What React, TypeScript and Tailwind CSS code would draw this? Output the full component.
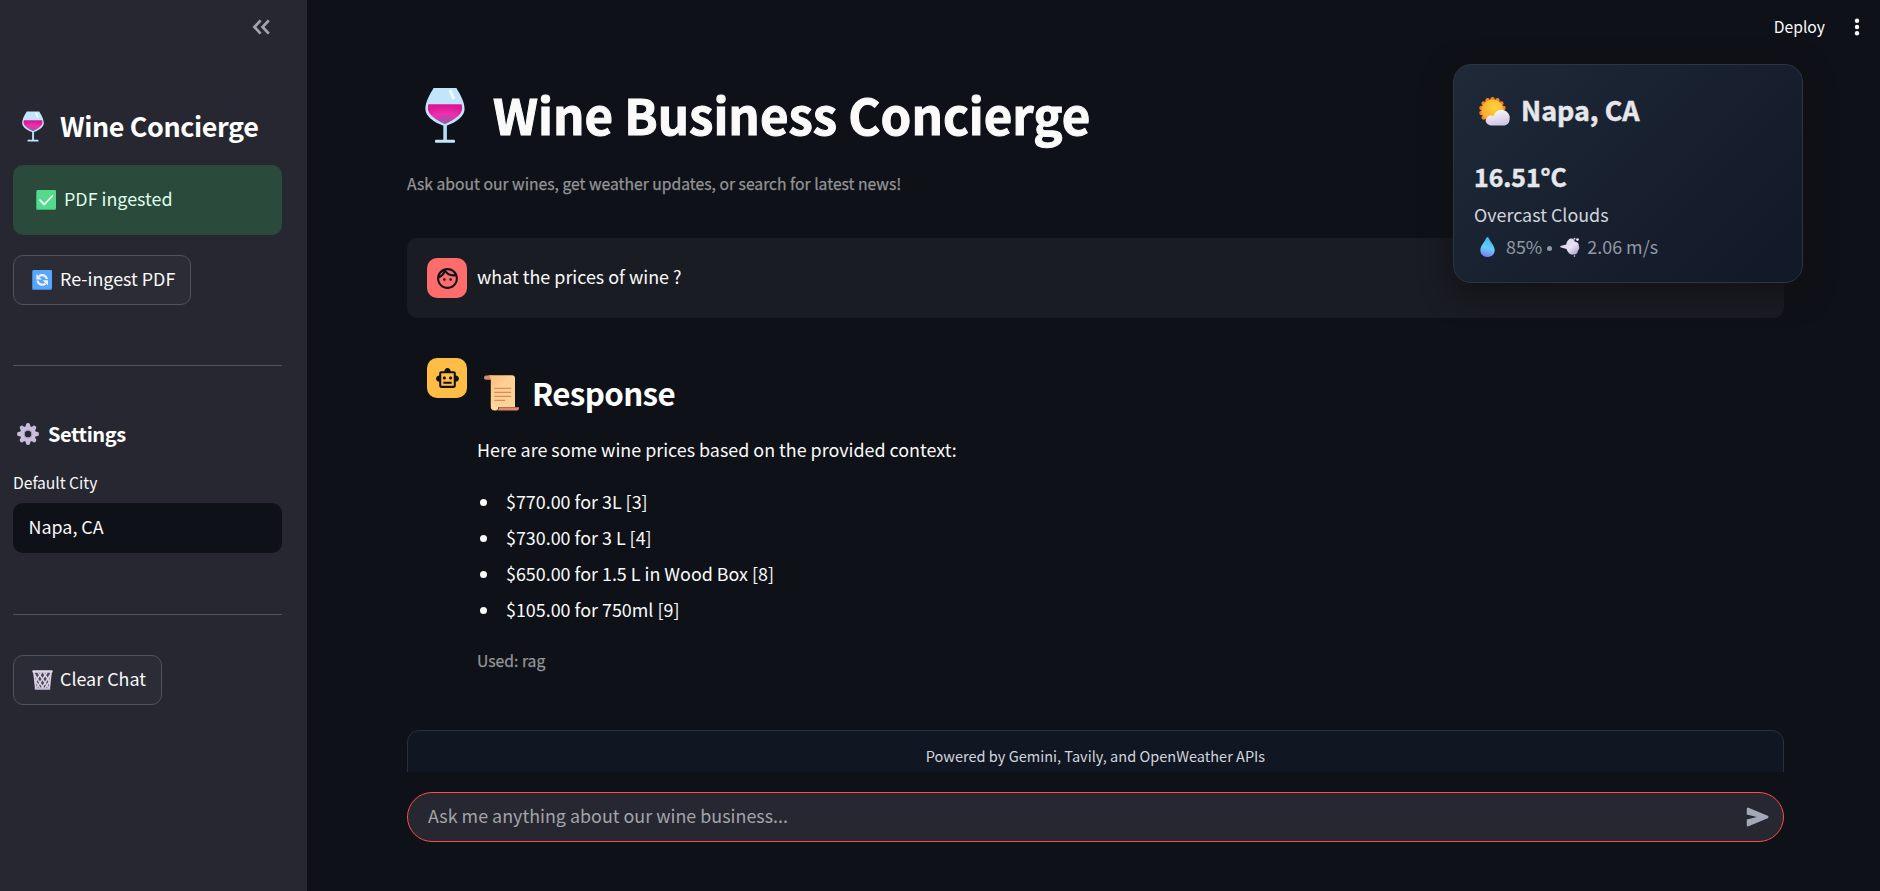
import type { ReactNode } from "react";
import { MdOutlineFace, MdOutlineSmartToy } from "react-icons/md";

function WineGlass({ className }: { className: string }) {
  return (
    <svg viewBox="0 0 40 55" className={className}>
      <defs>
        <radialGradient id="wine" cx=".5" cy="1.05" r=".95">
          <stop offset="0" stopColor="#8a6fbb" />
          <stop offset="0.3" stopColor="#b24bab" />
          <stop offset="0.62" stopColor="#ee2fae" />
          <stop offset="1" stopColor="#dc1896" />
        </radialGradient>
      </defs>
      <path d="M18.3 34h3.6v18h-3.6z" fill="#b4dcf5" />
      <rect x="10" y="51.8" width="20" height="3" rx="1" fill="#c3e8fd" />
      <path d="M8.6 0h22.8c3.2 5.4 8.2 13.4 8.2 21 0 7-7.6 12.8-17.6 16.6h-4C8 33.8.4 28 .4 21 .4 13.4 5.4 5.4 8.6 0z" fill="#c0e5fc" />
      <path d="M3.4 16.2h33.2c.9 3.2.8 6.3-1.2 9.2C32 30 25 33.6 20 36.2 15 33.6 8 30 4.6 25.4c-2-2.9-2.1-6-1.2-9.2z" fill="url(#wine)" />
      <path d="M25.4 3.4l3 6.4" stroke="#f2fbff" strokeWidth="3.2" strokeLinecap="round" />
    </svg>
  );
}

function CheckMark() {
  return (
    <svg viewBox="0 0 20 20" className="size-5">
      <rect width="20" height="20" rx="1.6" fill="#3bb577" />
      <rect x="1" width="19" height="19" rx="1.4" fill="#55d98e" />
      <path d="M4 10.2l4.2 4.3L16.3 6" fill="none" stroke="#fff" strokeWidth="1.8" strokeLinecap="round" strokeLinejoin="round" />
    </svg>
  );
}

function Refresh() {
  return (
    <svg viewBox="0 0 20 20" className="size-5">
      <rect width="20" height="20" rx="1.6" fill="#3f86dc" />
      <rect x="1" width="19" height="19" rx="1.4" fill="#57a6fb" />
      <g fill="none" stroke="#f3f1fd" strokeWidth="2.2">
        <path d="M15 9A5 5 0 0 0 7 6.2" />
        <path d="M5.4 10.6a5 5 0 0 0 8 3" />
      </g>
      <path d="M4.4 4v5.4h5.4zM16 15.6v-5.4h-5.4z" fill="#f3f1fd" />
    </svg>
  );
}

function Gear() {
  return (
    <svg viewBox="0 0 22 22" className="size-[22px]">
      <g strokeWidth="4.4" strokeLinecap="round">
        <path d="M11 2.2v3M11 17v2.8M2.2 11h3M17 11h2.8" stroke="#c9bedb" />
        <path d="M4.9 4.9l2 2M15.1 15.1l2 2M17.1 4.9l-2 2M4.9 17.1l2-2" stroke="#c4b8d7" />
      </g>
      <circle cx="11" cy="11" r="5.8" fill="none" stroke="#c9bfdb" strokeWidth="4.6" />
      <circle cx="11" cy="11" r="4" fill="none" stroke="#a99bc0" strokeWidth="1" />
    </svg>
  );
}

function Trash() {
  return (
    <svg viewBox="0 0 21 20" className="h-5 w-[21px]">
      <path d="M2 2h17l-1.8 17.5H3.8z" fill="#4c4858" />
      <g fill="none" stroke="#d8d1e3" strokeWidth="1.5">
        <path d="M2.2 4l9.4 14.5M6 2.5l10.8 15.8M11.5 2.5l6 9M3.4 11l4.8 7.5" />
        <path d="M18.8 4L9.4 18.5M15 2.5L4.2 18.3M9.5 2.5l-6 9M17.6 11l-4.8 7.5" />
        <path d="M2 2l1.9 17M19 2l-1.900 17" strokeWidth="1.8" />
      </g>
      <rect x=".3" y=".2" width="20.4" height="2.6" rx="1" fill="#dfd9e8" />
      <rect x="2.6" y="17.8" width="15.8" height="2" rx="1" fill="#c5bad4" />
    </svg>
  );
}

function Scroll() {
  return (
    <svg viewBox="0 0 35 36" className="h-9 w-[35px]">
      <defs>
        <linearGradient id="paper" x1="0" y1="0" x2="1" y2="1">
          <stop offset="0" stopColor="#fbb877" />
          <stop offset="0.4" stopColor="#ffcf93" />
          <stop offset="1" stopColor="#fbd49a" />
        </linearGradient>
      </defs>
      <path d="M0 2.6C0 1 1.2.4 3 .4h6v4.4H2C.8 4.8 0 4 0 2.6z" fill="#d98b66" />
      <path d="M4 .3h24.2c1.7 0 2.8 1.1 2.8 2.8v29H11c-3 0-4.2-1.6-4.2-4V5C6.8 2.2 6 .8 4 .3z" fill="url(#paper)" />
      <path d="M12 35.6c2.2 0 3-1.4 3-3.4h20c.2 2.2-.8 3.4-2.8 3.4z" fill="#e0896a" />
      <path d="M6.8 28v4c0 2.2 1.5 3.6 3.8 3.6 2.5 0 3.9-1.3 3.9-3.4z" fill="#ffd99b" />
      <path d="M10.2 13.4h17M10.2 17.4h17M10.2 21.4h17M10.2 25.4h11" stroke="#d98c5c" strokeWidth="1.3" />
    </svg>
  );
}

function SunCloud() {
  const rays = Array.from({ length: 14 }, (_, i) => (i * Math.PI * 2) / 14);
  return (
    <svg viewBox="0 0 31 29" className="h-[29px] w-[31px]">
      <defs>
        <radialGradient id="sun" cx=".6" cy=".35" r=".7">
          <stop offset="0" stopColor="#ffd43a" />
          <stop offset="1" stopColor="#f8a52c" />
        </radialGradient>
        <linearGradient id="cloud" x1=".3" y1="0" x2=".6" y2="1">
          <stop offset="0" stopColor="#fbfafd" />
          <stop offset="1" stopColor="#cdc6e4" />
        </linearGradient>
      </defs>
      {rays.map((a) => (
        <circle key={a} cx={13.5 + Math.sin(a) * 11.3} cy={13.5 - Math.cos(a) * 11.3} r="2.2" fill="#f5822a" />
      ))}
      <circle cx="13.5" cy="13.5" r="11" fill="url(#sun)" />
      <path d="M12 28.500a5 5 0 0 1 0-10c1 0 1.8.2 2.5.6a7.3 7.3 0 0 1 16 3.6c0 3.4-2.6 5.8-6 5.8z" fill="url(#cloud)" />
    </svg>
  );
}

function Droplet() {
  return (
    <svg viewBox="0 0 15 20" className="h-5 w-[15px]">
      <defs>
        <linearGradient id="drop" x1=".6" y1="0" x2=".4" y2="1">
          <stop offset="0" stopColor="#3fb4ea" />
          <stop offset="0.55" stopColor="#66cdfb" />
          <stop offset="1" stopColor="#7c7bf2" />
        </linearGradient>
      </defs>
      <path d="M7.5 0c.5 0 .8.3 1 .7C11 5.5 14.7 9 14.7 13.2c0 4-3.2 6.8-7.2 6.8S.3 17.2.3 13.2C.3 9 4 5.5 6.5.7c.2-.4.5-.7 1-.7z" fill="url(#drop)" />
    </svg>
  );
}

function Dash() {
  return (
    <svg viewBox="0 0 20 20" className="size-5">
      <defs>
        <linearGradient id="puff" x1="0" y1="0" x2="1" y2="1">
          <stop offset="0" stopColor="#d9cde6" />
          <stop offset=".55" stopColor="#eae1f3" />
          <stop offset="1" stopColor="#a995c4" />
        </linearGradient>
      </defs>
      <path d="M.3 9l6-1.6C7 3.4 9.6.8 12.4 1.8c1.6.4 2 1.6 2.2 2.6 2.6.2 4.4 2 4.2 4 .8 2 .6 4-1 5.4.2 2.4-1.8 4-4 3.8-3.6.6-6.4-2.4-7.2-5.6L.3 10.3z" fill="url(#puff)" />
      <circle cx="14.5" cy="1.7" r="1" fill="#d8cce6" />
      <circle cx="17.5" cy="2.6" r="1.4" fill="#e9e2f2" />
      <circle cx="14.5" cy="19" r=".8" fill="#d8cce6" />
    </svg>
  );
}

function T({ children, className = "pb-[5px]" }: { children: ReactNode; className?: string }) {
  return <span className={"whitespace-nowrap " + className}>{children}</span>;
}

const prices = ["$770.00 for 3L [3]", "$730.00 for 3 L [4]", "$650.00 for 1.5 L in Wood Box [8]", "$105.00 for 750ml [9]"];

export default function App() {
  return (
    <div className="relative flex h-[891px] w-full overflow-hidden bg-[#0e1117] font-['Noto_Sans_CJK_SC','Noto_Sans',sans-serif] text-[17.9px] leading-[30px] text-[#fafafa]">
      <aside className="flex w-[307px] shrink-0 flex-col bg-[#262730] pr-[25px] pl-[13px]">
        <div className="flex h-[54px] items-center justify-end pr-3">
          <svg viewBox="0 0 18 16" className="h-4 w-[18px]" fill="none" stroke="#a3a3a8" strokeWidth="2.8" strokeLinejoin="miter">
            <path d="M8.6 1.4L2.4 8l6.2 6.6M16.8 1.4L10.6 8l6.2 6.6" />
          </svg>
        </div>
        <h2 className="mt-[51px] flex h-[42px] items-center pl-[9px] text-[26.9px] leading-[42px] font-bold tracking-[-0.4px] text-white">
          <WineGlass className="h-[31px] w-[22px]" />
          <T className="ml-4 pb-px">Wine Concierge</T>
        </h2>
        <div className="mt-[18px] flex h-[70px] items-center rounded-[10px] bg-[#2a4a3b] pl-[23px] text-[#dffde9]">
          <CheckMark />
          <T className="ml-2 pb-[5px]">PDF ingested</T>
        </div>
        <button className="mt-5 flex h-[50px] w-[178px] items-center rounded-[10px] border border-[#51525b] bg-[#2b2c36] pl-[18px]">
          <Refresh />
          <T className="ml-2 pb-[5px]">Re-ingest PDF</T>
        </button>
        <hr className="mt-[60px] border-t border-[#51525b]" />
        <h3 className="mt-[53px] flex h-[30px] items-center pl-1 text-[20px] font-bold tracking-[-0.4px] text-white">
          <Gear />
          <T className="ml-[9px] pb-px">Settings</T>
        </h3>
        <label className="mt-[21px] text-[15.7px] leading-[26px] tracking-[-0.05px]">Default City</label>
        <div className="mt-[7px] flex h-[50px] items-center rounded-[10px] bg-[#0e1117] pl-[15px]">
          <T className="ml-[0.5px] pb-[5px]">Napa, CA</T>
        </div>
        <hr className="mt-[61px] border-t border-[#51525b]" />
        <button className="mt-10 flex h-[50px] w-[149px] items-center rounded-[10px] border border-[#51525b] bg-[#2b2c36] pl-[18px]">
          <Trash />
          <T className="ml-[7px] pb-[5px]">Clear Chat</T>
        </button>
      </aside>

      <main className="flex min-w-0 flex-1 flex-col">
        <header className="flex h-[54px] shrink-0 items-center justify-end pr-5 text-[15.7px]">
          <span>Deploy</span>
          <svg viewBox="0 0 6 18" className="ml-[29px] h-[18px] w-1.5" fill="#fafafa">
            <circle cx="3" cy="2.7" r="2.2" />
            <circle cx="3" cy="9" r="2.2" />
            <circle cx="3" cy="15.3" r="2.2" />
          </svg>
        </header>
        <div className="flex h-[718px] flex-col overflow-hidden pr-24 pl-[100px]">
          <h1 className="mt-[26px] flex h-[70px] shrink-0 items-center pl-[18px] text-[49.2px] leading-[70px] font-bold [-webkit-text-stroke:1px_#fafafa]">
            <WineGlass className="h-[55px] w-10" />
            <T className="ml-7 pb-[3px]">Wine Business Concierge</T>
          </h1>
          <p className="mt-[21px] text-[15.7px] leading-[26px] text-[#949597] [-webkit-text-stroke:0.25px_#949597]">
            Ask about our wines, get weather updates, or search for latest news!
          </p>
          <div className="mt-[41px] flex h-20 shrink-0 items-center rounded-[10px] bg-[#1a1c24] pl-5">
            <div className="flex size-10 items-center justify-center rounded-[10px] bg-[#ff6c6c] text-[#0e1117]">
              <MdOutlineFace size={25} />
            </div>
            <T className="ml-[10px] pb-[5px]">what the prices of wine ?</T>
          </div>
          <div className="mt-10 flex shrink-0 pl-5">
            <div className="flex size-10 shrink-0 items-center justify-center rounded-[10px] bg-[#ffbd45] text-[#0e1117]">
              <MdOutlineSmartToy size={25} />
            </div>
            <div className="ml-[10px] flex flex-col">
              <h2 className="mt-[13px] flex h-11 items-center pl-[7px] text-[31.3px] leading-[44px] font-bold tracking-[-0.65px] text-white">
                <Scroll />
                <T className="ml-[13px] pb-px">Response</T>
              </h2>
              <p className="mt-[19px]">Here are some wine prices based on the provided context:</p>
              <ul className="mt-5 flex flex-col">
                {prices.map((p) => (
                  <li key={p} className="flex h-9 items-center">
                    <span className="ml-[3px] size-[7px] rounded-full bg-[#fafafa]" />
                    <T className="ml-[19px] pb-[3px]">{p}</T>
                  </li>
                ))}
              </ul>
              <p className="mt-5 text-[15.7px] leading-[26px] text-[#949597] [-webkit-text-stroke:0.25px_#949597]">Used: rag</p>
            </div>
          </div>
          <footer className="mt-[56px] flex h-[60px] shrink-0 justify-center rounded-t-xl border border-[#29303b] bg-[#101622] pt-3 text-[14.55px] leading-[26px] text-[#d1d5db]">
            Powered by Gemini, Tavily, and OpenWeather APIs
          </footer>
        </div>
        <div className="mt-5 mr-24 ml-[100px] flex h-[50px] shrink-0 items-center justify-between rounded-full border border-[#ff4b4b] bg-[#262730] pr-[10px] pl-5 text-[#a3a4a9]">
          <T>Ask me anything about our wine business...</T>
          <svg viewBox="0 -960 960 960" className="size-[30px]" fill="#a3a8b8">
            <path d="M792-443 176-183q-20 8-38-3.5T120-220v-180l320-80-320-80v-180q0-22 18-33.5t38-3.5l616 260q25 11 25 37t-25 37Z" />
          </svg>
        </div>
      </main>

      <section className="absolute top-16 left-[1453px] flex h-[219px] w-[350px] flex-col rounded-[18px] border border-[#2c3544] bg-linear-135 from-[#1f2937] to-[#111827] pl-5 text-[#e5e7eb] shadow-[0_10px_30px_rgba(17,17,16,0.85)]">
        <h3 className="mt-[26px] flex h-10 items-center pl-[5px] text-[26.9px] leading-10 font-bold [-webkit-text-stroke:0.5px_#e5e7eb]">
          <SunCloud />
          <T className="ml-[11px] pb-[3px]">Napa, CA</T>
        </h3>
        <p className="mt-[27px] text-[24.8px] leading-9 font-bold [-webkit-text-stroke:0.5px_#e5e7eb]">16.51°C</p>
        <p className="mt-1 leading-8 text-[#d1d5db]">Overcast Clouds</p>
        <p className="mt-px flex h-8 items-center pl-[6px] text-[#9199a6]">
          <Droplet />
          <T className="ml-[11px] pb-[3px]">85%</T>
          <span className="mt-0.5 ml-[5px] size-[5px] rounded-full bg-[#9199a6]" />
          <span className="ml-2"><Dash /></span>
          <T className="ml-[7px] pb-[3px]">2.06 m/s</T>
        </p>
      </section>
    </div>
  );
}
